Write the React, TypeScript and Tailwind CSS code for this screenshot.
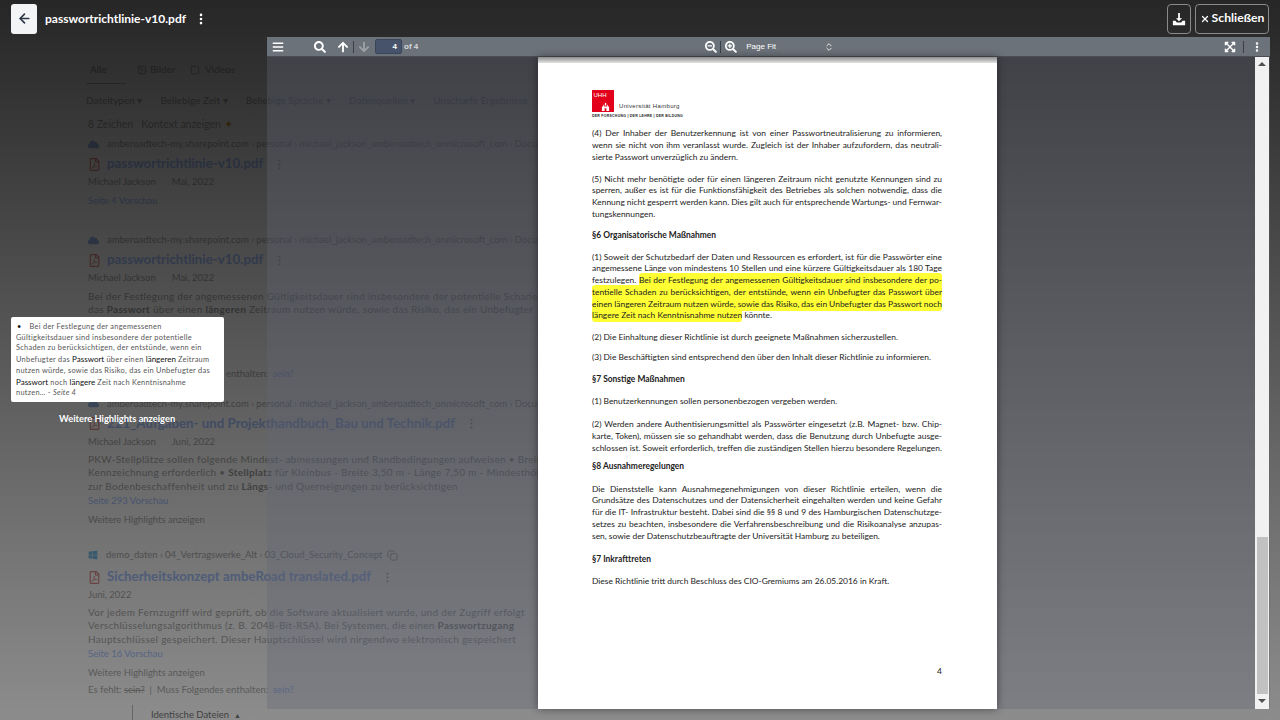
import React from "react";
import { ArrowLeft, ChevronsUpDown, Copy, EllipsisVertical, Image as ImageIcon, Square, X } from "lucide-react";
import {
  FaArrowDown,
  FaArrowUp,
  FaBars,
  FaCloud,
  FaExpandArrowsAlt,
  FaRegFilePdf,
  FaSearch,
  FaSearchMinus,
  FaSearchPlus,
  FaWindows,
} from "react-icons/fa";

interface DocBlock {
  top: number;
  lines: React.ReactNode[];
  bold?: boolean;
  lastJustified?: boolean;
}

const Hl = ({ children }: { children: React.ReactNode }) => (
  <span className="rounded-[3px] bg-[#ffff33] py-[2px]">{children}</span>
);

const docBlocks: DocBlock[] = [
  {
    top: 0,
    lines: [
      "(4) Der Inhaber der Benutzerkennung ist von einer Passwortneutralisierung zu informieren,",
      "wenn sie nicht von ihm veranlasst wurde. Zugleich ist der Inhaber aufzufordern, das neutrali-",
      "sierte Passwort unverzüglich zu ändern.",
    ],
  },
  {
    top: 10.3,
    lines: [
      "(5) Nicht mehr benötigte oder für einen längeren Zeitraum nicht genutzte Kennungen sind zu",
      "sperren, außer es ist für die Funktionsfähigkeit des Betriebes als solchen notwendig, dass die",
      "Kennung nicht gesperrt werden kann. Dies gilt auch für entsprechende Wartungs- und Fernwar-",
      "tungskennungen.",
    ],
  },
  { top: 9.3, bold: true, lines: ["§6 Organisatorische Maßnahmen"] },
  {
    top: 10.3,
    lines: [
      "(1) Soweit der Schutzbedarf der Daten und Ressourcen es erfordert, ist für die Passwörter eine",
      "angemessene Länge von mindestens 10 Stellen und eine kürzere Gültigkeitsdauer als 180 Tage",
      <>
        festzulegen. <Hl>Bei der Festlegung der angemessenen Gültigkeitsdauer sind insbesondere der po-</Hl>
      </>,
      <Hl>tentielle Schaden zu berücksichtigen, der entstünde, wenn ein Unbefugter das Passwort über</Hl>,
      <Hl>einen längeren Zeitraum nutzen würde, sowie das Risiko, das ein Unbefugter das Passwort noch</Hl>,
      <>
        <Hl>längere Zeit nach Kenntnisnahme nutzen</Hl> könnte.
      </>,
    ],
  },
  { top: 10.3, lines: ["(2) Die Einhaltung dieser Richtlinie ist durch geeignete Maßnahmen sicherzustellen."] },
  { top: 8.3, lines: ["(3) Die Beschäftigten sind entsprechend den über den Inhalt dieser Richtlinie zu informieren."] },
  { top: 10.3, bold: true, lines: ["§7 Sonstige Maßnahmen"] },
  { top: 10.3, lines: ["(1) Benutzerkennungen sollen personenbezogen vergeben werden."] },
  {
    top: 11.3,
    lines: [
      "(2) Werden andere Authentisierungsmittel als Passwörter eingesetzt (z.B. Magnet- bzw. Chip-",
      "karte, Token), müssen sie so gehandhabt werden, dass die Benutzung durch Unbefugte ausge-",
      "schlossen ist. Soweit erforderlich, treffen die zuständigen Stellen hierzu besondere Regelungen.",
    ],
    lastJustified: true,
  },
  { top: 6.3, bold: true, lines: ["§8 Ausnahmeregelungen"] },
  {
    top: 11.3,
    lines: [
      "Die Dienststelle kann Ausnahmegenehmigungen von dieser Richtlinie erteilen, wenn die",
      "Grundsätze des Datenschutzes und der Datensicherheit eingehalten werden und keine Gefahr",
      "für die IT- Infrastruktur besteht. Dabei sind die §§ 8 und 9 des Hamburgischen Datenschutzge-",
      "setzes zu beachten, insbesondere die Verfahrensbeschreibung und die Risikoanalyse anzupas-",
      "sen, sowie der Datenschutzbeauftragte der Universität Hamburg zu beteiligen.",
    ],
  },
  { top: 11.3, bold: true, lines: ["§7 Inkrafttreten"] },
  { top: 10.3, lines: ["Diese Richtlinie tritt durch Beschluss des CIO-Gremiums am 26.05.2016 in Kraft."] },
];

function Breadcrumb({ children, win }: { children: React.ReactNode; win?: boolean }) {
  return (
    <div className="flex h-[14px] items-center gap-[8px] whitespace-nowrap text-[9.5px] text-[#aaa]">
      {win ? <FaWindows className="size-[10px] text-[#7cc4f0]" /> : <FaCloud className="size-[11px] text-[#9ab4e8]" />}
      <span>{children}</span>
    </div>
  );
}

function ResultTitle({ title, low }: { title: string; low?: boolean }) {
  return (
    <div className={`flex h-[20px] items-center gap-[5px] whitespace-nowrap ${low ? "mt-[5px]" : "mt-[3px]"}`}>
      <FaRegFilePdf className="size-[13px] text-[#e09088]" />
      <span className="ml-[1px] text-[13.3px] font-bold text-[#a8c4ff]">{title}</span>
      <EllipsisVertical className="ml-[5px] size-[13px] text-[#aaa]" />
    </div>
  );
}

function Meta({ author, date }: { author?: string; date: string }) {
  return (
    <div className="flex h-[16px] items-center gap-[16px] text-[9.5px] text-[#aaa]">
      {author && <span>{author}</span>}
      <span>{date}</span>
    </div>
  );
}

function Snippet({ lines, top }: { lines: React.ReactNode[]; top: string }) {
  return (
    <div className={`${top} whitespace-nowrap text-[10px] leading-[13.4px] tracking-[0.3px] text-[#aaa]`}>
      {lines.map((line, i) => (
        <div key={i}>{line}</div>
      ))}
    </div>
  );
}

const FilterLine = () => (
  <div className="h-[14px] whitespace-nowrap text-[9.5px] text-[#aaa]">
    Es fehlt: <s>sein?</s> &nbsp;|&nbsp; Muss Folgendes enthalten: &nbsp;<span className="text-[#a8c4ff]">sein?</span>
  </div>
);

function ResultsPage() {
  return (
    <div className="pl-[88px] pt-[62px] font-['Lato',sans-serif]">
      <div className="flex h-[15px] items-center whitespace-nowrap text-[10px] text-[#aaa]">
        <span className="-ml-[2px] w-[51px] pl-[4px] text-[#999]">Alle</span>
        <ImageIcon className="size-[10px]" />
        <span className="ml-[3px] w-[40px]">Bilder</span>
        <Square className="size-[10px]" />
        <span className="ml-[5px]">Videos</span>
      </div>
      <div className="-ml-[2px] mt-[6px] h-px w-[40px] bg-[#bbb]" />
      <div className="-ml-[2px] mt-[9px] flex h-[15px] items-center gap-[18px] whitespace-nowrap text-[10px] text-[#aaa]">
        <span>Dateitypen ▾</span>
        <span>Beliebige Zeit ▾</span>
        <span>Beliebige Sprache ▾</span>
        <span>Datenquellen ▾</span>
        <span>Unscharfe Ergebnisse</span>
      </div>
      <div className="mt-[9px] flex h-[15px] items-center gap-[8px] whitespace-nowrap text-[10.5px] text-[#aaa]">
        <span>8 Zeichen</span>
        <span>
          Kontext anzeigen <span className="text-[#e0a040]">✦</span>
        </span>
      </div>

      <div className="mt-[5px]">
        <Breadcrumb>amberoadtech-my.sharepoint.com › personal › michael_jackson_amberoadtech_onmicrosoft_com › Documents</Breadcrumb>
        <ResultTitle title="passwortrichtlinie-v10.pdf" />
        <Meta author="Michael Jackson" date="Mai, 2022" />
        <div className="mt-[4px] h-[14px] text-[9.5px] text-[#a8c4ff]">Seite 4 Vorschau</div>
      </div>

      <div className="mt-[25px]">
        <Breadcrumb>amberoadtech-my.sharepoint.com › personal › michael_jackson_amberoadtech_onmicrosoft_com › Documents</Breadcrumb>
        <ResultTitle title="passwortrichtlinie-v10.pdf" />
        <Meta author="Michael Jackson" date="Mai, 2022" />
        <Snippet
          top="mt-[4px]"
          lines={[
            "Bei der Festlegung der angemessenen Gültigkeitsdauer sind insbesondere der potentielle Schaden zu",
            <>
              das <b className="text-[#999]">Passwort</b> über einen <b className="text-[#999]">längeren</b> Zeitraum nutzen würde, sowie das Risiko, das ein Unbefugter
            </>,
          ]}
        />
        <div className="mt-[50px]">
          <FilterLine />
        </div>
      </div>

      <div className="mt-[16px]">
        <Breadcrumb>amberoadtech-my.sharepoint.com › personal › michael_jackson_amberoadtech_onmicrosoft_com › Documents</Breadcrumb>
        <ResultTitle title="221_Aufgaben- und Projekthandbuch_Bau und Technik.pdf" />
        <Meta author="Michael Jackson" date="Juni, 2022" />
        <Snippet
          top="mt-[3px]"
          lines={[
            "PKW-Stellplätze sollen folgende Mindest- abmessungen und Randbedingungen aufweisen • Breite",
            <>
              Kennzeichnung erforderlich • <b className="text-[#999]">Stellplatz</b> für Kleinbus - Breite 3,50 m - Länge 7,50 m - Mindesthöhe
            </>,
            <>
              zur Bodenbeschaffenheit und zu <b className="text-[#999]">Längs</b>- und Querneigungen zu berücksichtigen
            </>,
          ]}
        />
        <div className="mt-px h-[14px] text-[9.5px] text-[#a8c4ff]">Seite 293 Vorschau</div>
        <div className="mt-[5px] h-[14px] text-[9.5px] text-[#aaa]">Weitere Highlights anzeigen</div>
      </div>

      <div className="mt-[21px]">
        <Breadcrumb win>
          demo_daten › 04_Vertragswerke_Alt › 03_Cloud_Security_Concept <Copy className="ml-[2px] inline size-[11px]" />
        </Breadcrumb>
        <ResultTitle low title="Sicherheitskonzept ambeRoad translated.pdf" />
        <Meta date="Juni, 2022" />
        <Snippet
          top="mt-[3px]"
          lines={[
            "Vor jedem Fernzugriff wird geprüft, ob die Software aktualisiert wurde, und der Zugriff erfolgt",
            <>
              Verschlüsselungsalgorithmus (z. B. 2048-Bit-RSA). Bei Systemen, die einen <b className="text-[#999]">Passwortzugang</b>
            </>,
            "Hauptschlüssel gespeichert. Dieser Hauptschlüssel wird nirgendwo elektronisch gespeichert",
          ]}
        />
        <div className="mt-px h-[14px] text-[9.5px] text-[#a8c4ff]">Seite 16 Vorschau</div>
        <div className="mt-[5px] h-[14px] text-[9.5px] text-[#aaa]">Weitere Highlights anzeigen</div>
        <div className="mt-[3px]">
          <FilterLine />
        </div>
        <div className="ml-[44px] mt-[8px] flex h-[20px] items-center gap-[5px] border-l border-[#bbb] pl-[18px] text-[9.5px] text-[#777]">
          Identische Dateien <span className="text-[7px]">▲</span>
        </div>
      </div>
    </div>
  );
}

function UhhLogo() {
  return (
    <div className="flex w-[92px] flex-col font-['Liberation_Sans',sans-serif]">
      <div className="flex items-end gap-[5px]">
        <div className="flex size-[22px] flex-col justify-between bg-[#e2001a] p-[1.5px] text-[6px] leading-none text-white">
          <span>UHH</span>
          <svg viewBox="0 0 10 10" className="ml-auto mr-[3px] size-[9px]" fill="#fff">
            <path d="M1 10V5h1.500V3h1v2h3V3h1v2H9v5H6V7H4v3z" />
            <path d="M4.300 4V1h1.400v3z" />
          </svg>
        </div>
        <span className="mb-px whitespace-nowrap text-[6px] tracking-[0.32px] text-[#333]">Universität Hamburg</span>
      </div>
      <span className="mt-[2px] whitespace-nowrap text-[3.5px] font-bold tracking-[0.25px] text-[#222]">
        DER FORSCHUNG | DER LEHRE | DER BILDUNG
      </span>
    </div>
  );
}

function PdfPage() {
  return (
    <div className="ml-[271px] flex h-full w-[459px] flex-col bg-white pl-[54px] pr-[55px] font-['Lato',sans-serif] text-[#222] shadow-[0_0_8px_rgba(0,0,0,0.45)]">
      <div className="-ml-[54px] -mr-[55px] h-[6px] shrink-0 bg-gradient-to-b from-[#8d8d8d] to-[#e4e4e4]" />
      <div className="mt-[27px]">
        <UhhLogo />
      </div>
      <div className="mt-[9px] text-[8.43px] leading-[11.7px]">
        {docBlocks.map((block, i) => (
          <div key={i} style={{ marginTop: block.top }} className={block.bold ? "font-bold" : ""}>
            {block.lines.map((line, j) => (
              <div
                key={j}
                className={
                  j < block.lines.length - 1 || block.lastJustified
                    ? "text-justify [text-align-last:justify] [word-spacing:-0.3px]"
                    : "whitespace-nowrap"
                }
              >
                {line}
              </div>
            ))}
          </div>
        ))}
      </div>
      <div className="mt-[79px] text-right text-[8.43px] leading-[11.7px]">4</div>
    </div>
  );
}

function ViewerToolbar() {
  return (
    <div className="flex h-[20px] shrink-0 items-center border-b border-[#4a4e54] bg-[#6b727a] text-white">
      <FaBars className="ml-[5px] size-[12px]" />
      <FaSearch className="ml-[30px] size-[12px]" />
      <FaArrowUp className="ml-[11px] size-[12px]" />
      <span className="ml-[4px] h-[12px] w-px bg-[#3a3f45]" />
      <FaArrowDown className="ml-[4px] size-[12px] text-[#9aa0a6]" />
      <span className="ml-[5px] flex h-[15px] w-[27px] items-center justify-end rounded-[2px] border border-[#39465a] bg-[#46536a] pr-[4px] font-['Liberation_Sans',sans-serif] text-[8px] font-bold">
        4
      </span>
      <span className="ml-[2px] font-['Liberation_Sans',sans-serif] text-[8px] font-bold text-[#d8dadd]">of 4</span>
      <FaSearchMinus className="ml-[287px] size-[12px]" />
      <span className="ml-[3px] h-[12px] w-px bg-[#3a3f45]" />
      <FaSearchPlus className="ml-[4px] size-[12px]" />
      <span className="ml-[9px] w-[78px] font-['Liberation_Sans',sans-serif] text-[8px]">Page Fit</span>
      <ChevronsUpDown className="size-[10px]" />
      <FaExpandArrowsAlt className="ml-auto size-[12px]" />
      <span className="ml-[7px] h-[12px] w-px bg-[#3a3f45]" />
      <EllipsisVertical className="ml-[7px] mr-[7px] size-[12px]" strokeWidth={3} />
    </div>
  );
}

function ViewerScrollbar() {
  return (
    <div className="flex w-[14px] flex-col items-center bg-[#f1f1f1]">
      <span className="mt-[5px] h-0 w-0 border-x-[4px] border-b-[4px] border-x-transparent border-b-[#505050]" />
      <div className="mt-[471px] h-[157px] w-[11px] bg-[#c1c1c1]" />
      <span className="mt-[5px] h-0 w-0 border-x-[4px] border-t-[4px] border-x-transparent border-t-[#505050]" />
    </div>
  );
}

const Mark = ({ children }: { children: React.ReactNode }) => (
  <b className="text-[8px] font-normal tracking-normal text-[#111]">{children}</b>
);

export default function App() {
  return (
    <div className="relative h-[720px] w-[1280px] overflow-hidden bg-white">
      <ResultsPage />

      {/* dimmed backdrop */}
      <div className="absolute inset-0 flex flex-col bg-gradient-to-b from-black/85 to-black/45 font-['Lato',sans-serif]">
        <div className="flex h-[37px] shrink-0 items-center pl-[11px] pr-[11px]">
          <button className="flex h-[30px] w-[26px] items-center justify-center rounded-[3px] bg-[#f3f4f6] text-[#2a3444]">
            <ArrowLeft className="size-[15px]" strokeWidth={2.5} />
          </button>
          <span className="ml-[8px] text-[12px] font-bold text-white">passwortrichtlinie-v10.pdf</span>
          <EllipsisVertical className="ml-[8px] size-[14px] text-white" strokeWidth={2.5} />
          <button className="ml-auto flex h-[30px] w-[24px] items-center justify-center rounded-[4px] border border-[#8a8a8c] text-white">
            <svg viewBox="0 0 16 16" className="size-[14px]" fill="currentColor">
              <path d="M7 1h2v6h2.500L8 10.500 4.500 7H7z" />
              <path d="M1 10h3l1.500 2h5L12 10h3v5H1z" />
            </svg>
          </button>
          <button className="ml-[4px] flex h-[30px] w-[74px] items-center justify-center gap-[2px] rounded-[4px] border border-[#8a8a8c] text-[12.2px] font-bold text-white">
            <X className="size-[10px]" strokeWidth={3} />
            Schließen
          </button>
        </div>
      </div>

      {/* pdf viewer */}
      <div className="absolute left-[267px] top-[37px] flex h-[672px] w-[1003px] flex-col bg-[#626778]/35">
        <ViewerToolbar />
        <div className="flex min-h-0 flex-1">
          <div className="min-w-0 flex-1">
            <PdfPage />
          </div>
          <ViewerScrollbar />
          <div className="w-px" />
        </div>
      </div>

      {/* highlights popover */}
      <div className="absolute left-[11px] top-[317px] h-[85px] w-[213px] rounded-[2px] bg-white pl-[5px] pr-[6px] pt-[5px] font-['Lato',sans-serif] text-[7.4px] leading-[10.7px] tracking-[0.28px] text-[#555]">
        <div className="whitespace-nowrap">
          <span className="ml-[1px] mr-[8px] text-[#111]">•</span>Bei der Festlegung der angemessenen
        </div>
        <div className="whitespace-nowrap">Gültigkeitsdauer sind insbesondere der potentielle</div>
        <div className="whitespace-nowrap">Schaden zu berücksichtigen, der entstünde, wenn ein</div>
        <div className="whitespace-nowrap">
          Unbefugter das <Mark>Passwort</Mark> über einen <Mark>längeren</Mark> Zeitraum
        </div>
        <div className="whitespace-nowrap">nutzen würde, sowie das Risiko, das ein Unbefugter das</div>
        <div className="whitespace-nowrap">
          <Mark>Passwort</Mark> noch <Mark>längere</Mark> Zeit nach Kenntnisnahme
        </div>
        <div className="whitespace-nowrap">
          nutzen… - <i>Seite 4</i>
        </div>
      </div>
      <div className="absolute left-[59px] top-[412px] whitespace-nowrap font-['Lato',sans-serif] text-[9.3px] font-bold text-white">
        Weitere Highlights anzeigen
      </div>
    </div>
  );
}
